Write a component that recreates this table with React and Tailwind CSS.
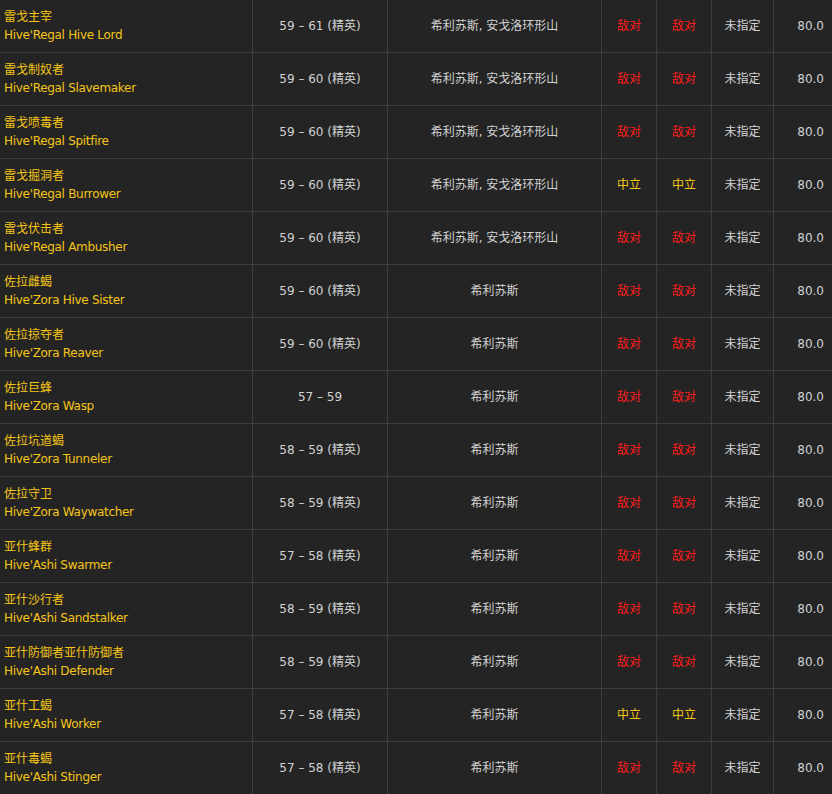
import React from "react";

const rows = [
  ["雷戈主宰", "Hive'Regal Hive Lord", "59 – 61 (精英)", "希利苏斯, 安戈洛环形山", "h"],
  ["雷戈制奴者", "Hive'Regal Slavemaker", "59 – 60 (精英)", "希利苏斯, 安戈洛环形山", "h"],
  ["雷戈喷毒者", "Hive'Regal Spitfire", "59 – 60 (精英)", "希利苏斯, 安戈洛环形山", "h"],
  ["雷戈掘洞者", "Hive'Regal Burrower", "59 – 60 (精英)", "希利苏斯, 安戈洛环形山", "n"],
  ["雷戈伏击者", "Hive'Regal Ambusher", "59 – 60 (精英)", "希利苏斯, 安戈洛环形山", "h"],
  ["佐拉雌蝎", "Hive'Zora Hive Sister", "59 – 60 (精英)", "希利苏斯", "h"],
  ["佐拉掠夺者", "Hive'Zora Reaver", "59 – 60 (精英)", "希利苏斯", "h"],
  ["佐拉巨蜂", "Hive'Zora Wasp", "57 – 59", "希利苏斯", "h"],
  ["佐拉坑道蝎", "Hive'Zora Tunneler", "58 – 59 (精英)", "希利苏斯", "h"],
  ["佐拉守卫", "Hive'Zora Waywatcher", "58 – 59 (精英)", "希利苏斯", "h"],
  ["亚什蜂群", "Hive'Ashi Swarmer", "57 – 58 (精英)", "希利苏斯", "h"],
  ["亚什沙行者", "Hive'Ashi Sandstalker", "58 – 59 (精英)", "希利苏斯", "h"],
  ["亚什防御者亚什防御者", "Hive'Ashi Defender", "58 – 59 (精英)", "希利苏斯", "h"],
  ["亚什工蝎", "Hive'Ashi Worker", "57 – 58 (精英)", "希利苏斯", "n"],
  ["亚什毒蝎", "Hive'Ashi Stinger", "57 – 58 (精英)", "希利苏斯", "h"],
];

export default function App() {
  return (
    <div
      className="w-[832px] h-[794px] overflow-hidden bg-[#242424] text-[12px] text-[#d2d2d2]"
      style={{ fontFamily: '"DejaVu Sans", "Noto Sans CJK SC", sans-serif' }}
    >
      {rows.map(([cn, en, lvl, zone, r], i) => {
        const hostile = r === "h";
        const rc = hostile ? "text-[#ff1c1c]" : "text-[#f5c518]";
        const rt = hostile ? "敌对" : "中立";
        return (
          <div
            key={i}
            className="grid grid-cols-[253px_135px_214px_55px_55px_62px_1fr] h-[53px] border-b border-[#3d3d3d]"
          >
            <div className="flex flex-col justify-center pl-[4px] border-r border-[#3d3d3d] text-[#f5c518] leading-[18px]">
              <span>{cn}</span>
              <span className="tracking-[-0.3px]">{en}</span>
            </div>
            <div className="flex items-center justify-center border-r border-[#3d3d3d]">{lvl}</div>
            <div className="flex items-center justify-center border-r border-[#3d3d3d]">{zone}</div>
            <div className={`flex items-center justify-center border-r border-[#3d3d3d] ${rc}`}>{rt}</div>
            <div className={`flex items-center justify-center border-r border-[#3d3d3d] ${rc}`}>{rt}</div>
            <div className="flex items-center justify-center border-r border-[#3d3d3d]">未指定</div>
            <div className="flex items-center justify-end pr-[8px]">80.0</div>
          </div>
        );
      })}
    </div>
  );
}
